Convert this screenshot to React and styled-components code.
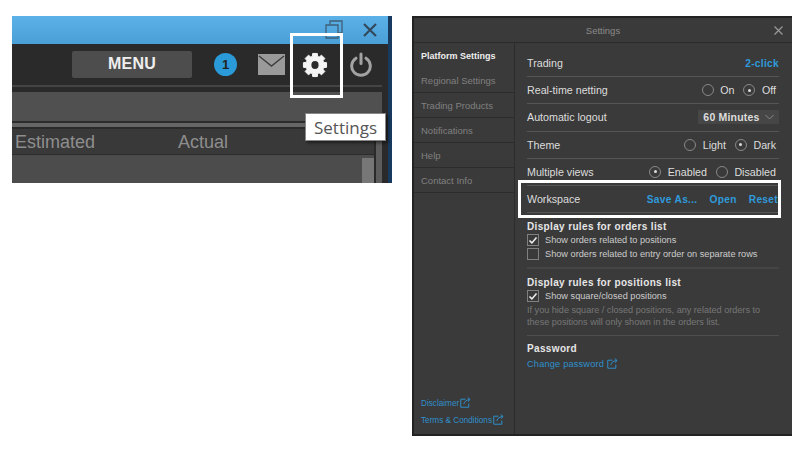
import React from 'react';
import styled, { createGlobalStyle } from 'styled-components';

const Global = createGlobalStyle`
  html, body { margin: 0; padding: 0; background: #fff; }
  body { font-family: "Liberation Sans", Arial, sans-serif; }
`;

const Page = styled.div`
  width: 807px;
  height: 453px;
  overflow: hidden;
  display: flex;
  align-items: flex-start;
  gap: 20px;
  padding: 16px 0 0 12px;
  box-sizing: border-box;
`;

/* left crop of the trading window */
const Shot = styled.div`
  position: relative;
  width: 380px;
  height: 167px;
  background: #2a2a2a;
  display: flex;
  flex-direction: column;
  border-right: 4px solid #173a5e;
  box-sizing: border-box;
`;

const TitleBar = styled.div`
  height: 28px;
  flex: none;
  background: linear-gradient(#5cb2e8, #4a9fd6);
  display: flex;
  justify-content: flex-end;
  align-items: center;
  gap: 20px;
  padding-right: 11px;
`;

const Toolbar = styled.div`
  height: 43px;
  flex: none;
  display: flex;
  align-items: center;
  padding-left: 60px;
  border-bottom: 2px solid #444;
  margin-right: 6px;
  box-sizing: border-box;
`;

const MenuButton = styled.div`
  width: 120px;
  height: 27px;
  box-sizing: border-box;
  padding-bottom: 2px;
  background: #4d4d4d;
  border-radius: 2px;
  color: #eee;
  font-size: 16px;
  font-weight: 700;
  letter-spacing: .2px;
  display: flex;
  align-items: center;
  justify-content: center;
`;

const Badge = styled.div`
  width: 23px;
  height: 23px;
  border-radius: 50%;
  background: #2b9ad8;
  color: #222;
  font-size: 13px;
  font-weight: 700;
  display: flex;
  align-items: center;
  justify-content: center;
  margin-left: 22px;
`;

const ToolIcon = styled.svg`
  flex: none;
  margin-left: ${p => p.$left}px;
`;

const Band = styled.div`
  height: 29px;
  flex: none;
  margin: 5px 6px 0 0;
  background: #505050;
  border-bottom: 2px solid #2c2c2c;
`;

const Stripe = styled.div`
  height: 4px;
  flex: none;
  margin-right: 6px;
  background: #666;
`;

const Grid = styled.div`
  flex: 1;
  display: flex;
  margin: 2px 6px 0 0;
  min-height: 0;
`;

const GridColumn = styled.div`
  flex: 1;
  display: flex;
  flex-direction: column;
  min-width: 0;
`;

const GridTrack = styled.div`
  width: 6px;
  flex: none;
  margin-left: 2px;
  background: #5c5c5c;
`;

const HeaderRow = styled.div`
  height: 26px;
  flex: none;
  box-sizing: border-box;
  background: #393939;
  border-bottom: 1px solid #2c2c2c;
  display: flex;
  align-items: center;
  color: #8e8e8e;
  font-size: 18px;
  padding: 2px 0 0 3px;
`;

const HeaderCell = styled.span`
  width: ${p => p.$w}px;
  flex: none;
`;

const TableBody = styled.div`
  flex: 1;
  background: #4c4c4c;
  display: flex;
  justify-content: flex-end;
`;

const ScrollThumb = styled.div`
  width: 12px;
  background: #777;
  margin-top: 3px;
`;

const Highlight = styled.div`
  position: absolute;
  left: ${p => p.$x}px;
  top: ${p => p.$y}px;
  width: ${p => p.$w}px;
  height: ${p => p.$h}px;
  border: 3px solid #fff;
  box-sizing: border-box;
`;

const Tip = styled.div`
  position: absolute;
  left: 293px;
  top: 97px;
  width: 81px;
  height: 28px;
  background: #fff;
  border: 1px solid #888;
  box-shadow: 2px 2px 3px rgba(0,0,0,.5);
  box-sizing: border-box;
  color: #555;
  font-family: "Open Sans", sans-serif;
  font-size: 17px;
  display: flex;
  align-items: center;
  justify-content: center;
`;

/* settings dialog */
const Dialog = styled.div`
  position: relative;
  width: 380px;
  height: 420px;
  background: #3a3a3a;
  border: solid #222;
  border-width: 2px 0 2px 2px;
  box-sizing: border-box;
  color: #ddd;
  display: flex;
  flex-direction: column;
`;

const DialogHead = styled.div`
  height: 25px;
  flex: none;
  box-sizing: border-box;
  border-bottom: 1px solid #2a2a2a;
  display: flex;
  align-items: center;
  justify-content: center;
  font-size: 9.5px;
  color: #8a8a8a;
  position: relative;
`;

const Close = styled.svg`
  position: absolute;
  right: 9px;
  top: 8px;
`;

const Body = styled.div`
  flex: 1;
  display: flex;
  min-height: 0;
`;

const Side = styled.div`
  width: 100px;
  flex: none;
  border-right: 1px solid #2c2c2c;
  display: flex;
  flex-direction: column;
`;

const SideItem = styled.div`
  height: 25px;
  flex: none;
  box-sizing: border-box;
  border-bottom: ${p => (p.$active ? '0' : '1px solid #2c2c2c')};
  padding-left: 7px;
  display: flex;
  align-items: center;
  font-size: ${p => (p.$active ? 9 : 9.5)}px;
  font-weight: ${p => (p.$active ? 700 : 400)};
  color: ${p => (p.$active ? '#eee' : '#808080')};
`;

const SideLinks = styled.div`
  margin-top: auto;
  display: flex;
  flex-direction: column;
  gap: 6px;
  padding: 0 0 9px 7px;
`;

const SideLink = styled.a`
  font-size: 8.2px;
  color: #2f90cc;
  display: flex;
  align-items: flex-end;
  gap: 1px;
  height: 11px;
`;

const Main = styled.div`
  flex: 1;
  padding: 7px 13px 0 12px;
  min-width: 0;
`;

const Row = styled.div`
  height: 27.2px;
  box-sizing: border-box;
  display: flex;
  align-items: center;
  justify-content: space-between;
  border-bottom: 1px solid #555;
  font-size: 10.7px;
  color: #ddd;
`;

const Options = styled.div`
  display: flex;
  align-items: center;
  gap: ${p => p.$gap || 9}px;
  padding-right: ${p => (p.$flush ? 1 : 3)}px;
`;

const Radio = styled.label`
  display: flex;
  align-items: center;
  gap: 6.5px;
`;

const Dot = styled.span`
  width: 12px;
  height: 12px;
  border: 1px solid #888;
  border-radius: 50%;
  box-sizing: border-box;
  display: flex;
  align-items: center;
  justify-content: center;
  &::after {
    content: '';
    width: 3px;
    height: 3px;
    border-radius: 50%;
    background: ${p => (p.$on ? '#ddd' : 'transparent')};
  }
`;

const BlueText = styled.a`
  color: #2f9bdc;
  font-weight: 700;
  font-size: 10.2px;
  letter-spacing: .3px;
`;

const Select = styled.div`
  width: 81px;
  height: 14px;
  background: #464646;
  display: flex;
  align-items: center;
  justify-content: center;
  gap: 5px;
  font-size: 10.5px;
  font-weight: 700;
  letter-spacing: .2px;
`;

const Heading = styled.div`
  font-size: 10px;
  font-weight: 700;
  letter-spacing: .35px;
  color: #e6e6e6;
  margin: ${p => p.$top}px 0 1px;
`;

const Check = styled.div`
  display: flex;
  align-items: center;
  gap: 6px;
  height: 14px;
  font-size: 9.2px;
  color: #ccc;
`;

const Box = styled.span`
  width: 12px;
  height: 12px;
  flex: none;
  border: 1px solid #808080;
  box-sizing: border-box;
  display: flex;
  align-items: center;
  justify-content: center;
`;

const Note = styled.div`
  font-size: 9.1px;
  line-height: 12px;
  margin-top: 1px;
  color: #777;
`;

const Rule = styled.div`
  height: ${p => p.$h}px;
  background: ${p => p.$c};
  margin-top: ${p => p.$top}px;
`;

const PasswordLink = styled.a`
  display: flex;
  align-items: flex-end;
  gap: 3px;
  margin-top: 4px;
  font-size: 9.2px;
  letter-spacing: .2px;
  color: #2f90cc;
`;

const ExternalIcon = ({ size = 11 }) => (
  <svg width={size} height={size} viewBox="0 0 10 10" fill="none" stroke="#2f90cc" strokeWidth="0.9">
    <path d="M5 2H.7v7.3H8V6" />
    <path d="M3.5 6.5C4 4 5.5 2.6 9 2.3M7 .5l2.2 1.8L7.2 4.2" />
  </svg>
);

const Tick = () => (
  <svg width="10" height="10" viewBox="0 0 10 10" fill="none" stroke="#eee" strokeWidth="1.6">
    <path d="M1.5 5.5l2.4 2.4L8.5 2.5" />
  </svg>
);

// eight square teeth round a solid body
const gearPoints = Array.from({ length: 8 }, (_, i) => {
  const a = (i * Math.PI) / 4 - Math.PI / 2;
  const pt = (r, d) => `${(13 + r * Math.cos(a + d)).toFixed(2)},${(13 + r * Math.sin(a + d)).toFixed(2)}`;
  return [pt(9, -0.3), pt(11.8, -0.2), pt(11.8, 0.2), pt(9, 0.3)].join(' ');
}).join(' ');

const RadioOption = ({ on, children }) => (
  <Radio>
    <Dot $on={on} />
    {children}
  </Radio>
);

const sideItems = ['Regional Settings', 'Trading Products', 'Notifications', 'Help', 'Contact Info'];

export default function App() {
  return (
    <Page>
      <Global />
      <Shot>
        <TitleBar>
          <svg width="18" height="20" viewBox="0 0 18 20" fill="none" stroke="#3f5f78" strokeWidth="1.3">
            <path d="M5 4.5V1h12v12h-4" />
            <path d="M1 5h12v13H1z" />
          </svg>
          <svg width="14" height="14" viewBox="0 0 14 14" stroke="#33495c" strokeWidth="2.2">
            <path d="M1 1l12 12M13 1L1 13" />
          </svg>
        </TitleBar>
        <Toolbar>
          <MenuButton>MENU</MenuButton>
          <Badge>1</Badge>
          <ToolIcon $left={21} width="27" height="21" viewBox="0 0 27 21">
            <rect width="27" height="21" fill="#9a9a9a" />
            <path d="M1 2l12.5 10L26 2" fill="none" stroke="#3d3d3d" strokeWidth="1.4" />
          </ToolIcon>
          <ToolIcon $left={17} width="26" height="26" viewBox="0 0 26 26">
            <polygon points={gearPoints} fill="#f4f4f4" stroke="#f4f4f4" strokeWidth="1" strokeLinejoin="round" />
            <ellipse cx="13" cy="13" rx="3.6" ry="4" fill="#2a2a2a" />
          </ToolIcon>
          <ToolIcon $left={22} width="22" height="25" viewBox="0 0 22 25" fill="none" stroke="#a2a2a2" strokeWidth="3" strokeLinecap="round">
            <path d="M6 6.2a9.3 9.3 0 1 0 10 0" />
            <path d="M11 2v9.5" />
          </ToolIcon>
        </Toolbar>
        <Band />
        <Stripe />
        <Grid>
          <GridColumn>
            <HeaderRow>
              <HeaderCell $w={163}>Estimated</HeaderCell>
              <HeaderCell $w={100}>Actual</HeaderCell>
            </HeaderRow>
            <TableBody><ScrollThumb /></TableBody>
          </GridColumn>
          <GridTrack />
        </Grid>
        <Highlight $x={278} $y={17} $w={53} $h={65} />
        <Tip>Settings</Tip>
      </Shot>

      <Dialog>
        <DialogHead>
          Settings
          <Close width="9" height="9" viewBox="0 0 9 9" stroke="#999" strokeWidth="1.2">
            <path d="M.5.5l8 8M8.5.5l-8 8" />
          </Close>
        </DialogHead>
        <Body>
          <Side>
            <SideItem $active>Platform Settings</SideItem>
            {sideItems.map(t => <SideItem key={t}>{t}</SideItem>)}
            <SideLinks>
              <SideLink>Disclaimer<ExternalIcon /></SideLink>
              <SideLink>Terms &amp; Conditions<ExternalIcon /></SideLink>
            </SideLinks>
          </Side>
          <Main>
            <Row>Trading<BlueText>2-click</BlueText></Row>
            <Row>
              Real-time netting
              <Options>
                <RadioOption>On</RadioOption>
                <RadioOption on>Off</RadioOption>
              </Options>
            </Row>
            <Row>
              Automatic logout
              <Select>
                60 Minutes
                <svg width="9" height="6" viewBox="0 0 9 6" fill="none" stroke="#888"><path d="M.5 1l4 4 4-4" /></svg>
              </Select>
            </Row>
            <Row>
              Theme
              <Options>
                <RadioOption>Light</RadioOption>
                <RadioOption on>Dark</RadioOption>
              </Options>
            </Row>
            <Row>
              Multiple views
              <Options>
                <RadioOption on>Enabled</RadioOption>
                <RadioOption>Disabled</RadioOption>
              </Options>
            </Row>
            <Row>
              Workspace
              <Options $gap={12} $flush>
                <BlueText>Save As...</BlueText>
                <BlueText>Open</BlueText>
                <BlueText>Reset</BlueText>
              </Options>
            </Row>

            <Heading $top={8}>Display rules for orders list</Heading>
            <Check><Box><Tick /></Box>Show orders related to positions</Check>
            <Check><Box />Show orders related to entry order on separate rows</Check>
            <Rule $h={2} $c="#444" $top={6} />

            <Heading $top={8}>Display rules for positions list</Heading>
            <Check><Box><Tick /></Box>Show square/closed positions</Check>
            <Note>
              If you hide square / closed positions, any related orders to<br />
              these positions will only shown in the orders list.
            </Note>
            <Rule $h={1} $c="#4e4e4e" $top={7} />

            <Heading $top={7}>Password</Heading>
            <PasswordLink>Change password <ExternalIcon /></PasswordLink>
          </Main>
        </Body>
        <Highlight $x={104} $y={162} $w={263} $h={38} />
      </Dialog>
    </Page>
  );
}
